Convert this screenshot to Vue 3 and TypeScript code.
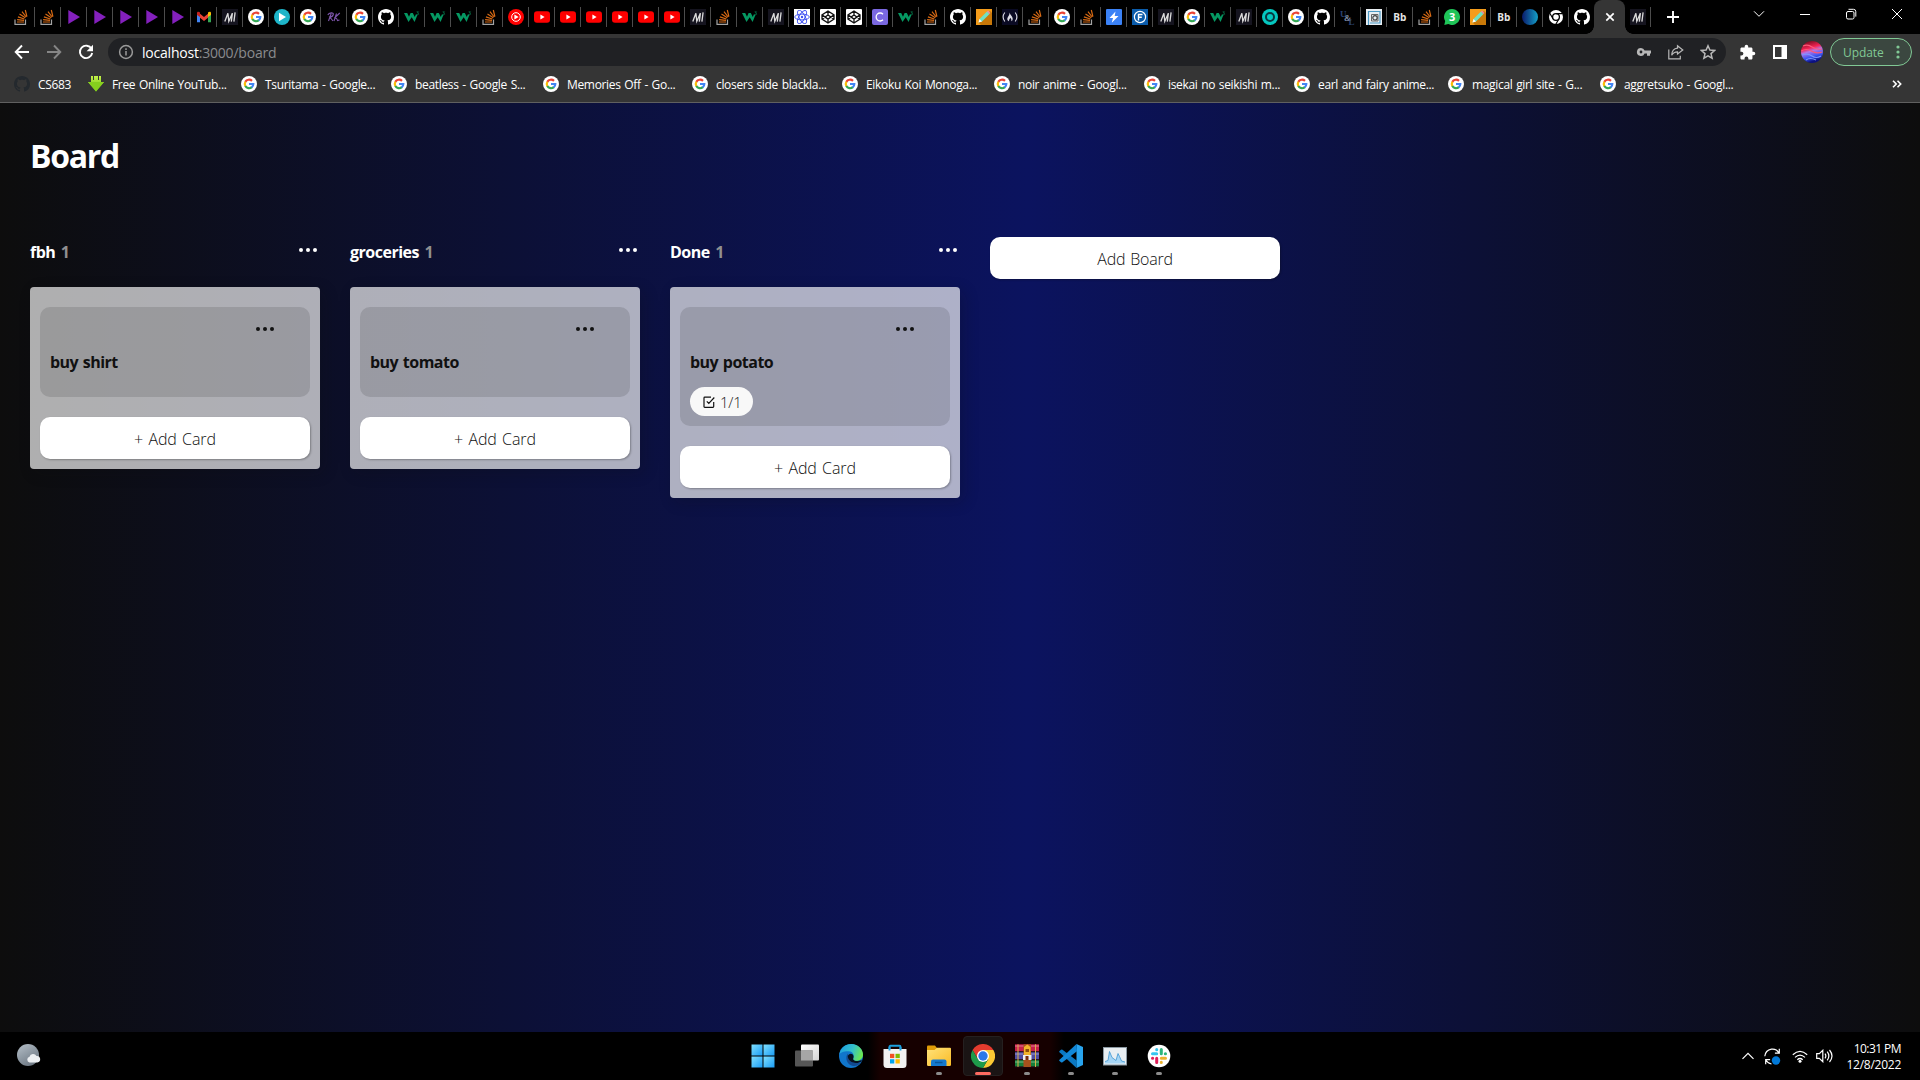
<script setup lang="ts">
interface Bookmark {
  icon: string
  label: string
  width: number
}

interface Card {
  title: string
  tasks?: string
}

interface Column {
  title: string
  cards: Card[]
}

interface TaskbarApp {
  icon: string
  state?: 'open' | 'active'
}

const tabs: string[] =
  ('so so play play play play play gmail em google teal google rk google github w3 w3 w3 so ytm ' +
    'yt yt yt yt yt yt em so w3 em react pen pen cee w3 so github pencil fcc so google so bolt eff em ' +
    'google w3 em ring google github ul maze bb so whatsapp pencil bb orb chromium github').split(' ')

const bookmarks: Bookmark[] = [
  { icon: 'github-dark', label: 'CS683', width: 74 },
  { icon: 'download', label: 'Free Online YouTub...', width: 153 },
  { icon: 'google', label: 'Tsuritama - Google...', width: 150 },
  { icon: 'google', label: 'beatless - Google S...', width: 152 },
  { icon: 'google', label: 'Memories Off - Go...', width: 149 },
  { icon: 'google', label: 'closers side blackla...', width: 150 },
  { icon: 'google', label: 'Eikoku Koi Monoga...', width: 152 },
  { icon: 'google', label: 'noir anime - Googl...', width: 150 },
  { icon: 'google', label: 'isekai no seikishi m...', width: 150 },
  { icon: 'google', label: 'earl and fairy anime...', width: 154 },
  { icon: 'google', label: 'magical girl site - G...', width: 152 },
  { icon: 'google', label: 'aggretsuko - Googl...', width: 150 },
]

const columns: Column[] = [
  { title: 'fbh', cards: [{ title: 'buy shirt' }] },
  { title: 'groceries', cards: [{ title: 'buy tomato' }] },
  { title: 'Done', cards: [{ title: 'buy potato', tasks: '1/1' }] },
]

const apps: TaskbarApp[] = [
  { icon: 'windows' },
  { icon: 'taskview' },
  { icon: 'edge' },
  { icon: 'store' },
  { icon: 'explorer', state: 'open' },
  { icon: 'chrome', state: 'active' },
  { icon: 'winrar', state: 'open' },
  { icon: 'vscode', state: 'open' },
  { icon: 'monitor', state: 'open' },
  { icon: 'slack', state: 'open' },
]
</script>

<template>
  <svg class="sprite" width="0" height="0" aria-hidden="true">
    <defs>
      <linearGradient id="g-win" x1="0" y1="0" x2="1" y2="1"><stop offset="0" stop-color="#7fe0ff" /><stop offset="1" stop-color="#1a9cf5" /></linearGradient>
      <linearGradient id="g-orb" x1="0" x2="1"><stop offset="0" stop-color="#0a1a6b" /><stop offset="1" stop-color="#14a0c8" /></linearGradient>
      <linearGradient id="g-edge" x1="0" y1="0.2" x2="1" y2="0.5"><stop offset="0" stop-color="#1b9de2" /><stop offset="0.55" stop-color="#35c1c9" /><stop offset="1" stop-color="#6be84f" /></linearGradient>
      <linearGradient id="g-moon" x1="0" y1="0" x2="0.6" y2="1"><stop offset="0" stop-color="#b6c0c9" /><stop offset="1" stop-color="#6f7a85" /></linearGradient>
      <linearGradient id="g-folder" x1="0" y1="0" x2="1" y2="1"><stop offset="0" stop-color="#ffe27a" /><stop offset="1" stop-color="#fabb26" /></linearGradient>
      <linearGradient id="g-tv" x1="0" y1="0" x2="1" y2="1"><stop offset="0" stop-color="#fff" /><stop offset="1" stop-color="#d4d4d4" /></linearGradient>
      <linearGradient id="g-av" x1="0" y1="0" x2="0.3" y2="1"><stop offset="0" stop-color="#54040f" /><stop offset="0.4" stop-color="#f52454" /><stop offset="0.55" stop-color="#b277e8" /><stop offset="0.8" stop-color="#3a55f2" /><stop offset="1" stop-color="#0c1080" /></linearGradient>
      <linearGradient id="g-dl" x1="0" y1="0" x2="0" y2="1"><stop offset="0" stop-color="#c4f24a" /><stop offset="1" stop-color="#63b80b" /></linearGradient>
    </defs>
    <symbol id="so" viewBox="0 0 16 16">
      <path d="M1 10.5v4.8h10.500v-4.800" fill="none" stroke="#a3a3a3" stroke-width="1.2" />
      <path d="M3 13h7M3.100 10.600l6.900.8M3.900 7.900l6.500 2.100M5.500 5l5.800 3.700M8 2.600l4.200 5.400M11.300 1l1.600 6.600" stroke="#d86a14" stroke-width="1.2" fill="none" />
    </symbol>
    <symbol id="play" viewBox="0 0 16 16"><path d="M2.300 1l11.700 7-11.700 7z" fill="#8420bd" /></symbol>
    <symbol id="gmail" viewBox="0 0 16 16">
      <path d="M1 4v9.300h3V7z" fill="#4285f4" /><path d="M15 4v9.300h-3V7z" fill="#34a853" />
      <path d="M4 4.700l4 3.200 4-3.200v4L8 12 4 8.700z" fill="#ea4335" />
      <path d="M1 3.800C1 2.500 2.800 2.200 4 3.400V8L1 6z" fill="#c5221f" /><path d="M15 3.800C15 2.500 13.200 2.200 12 3.400V8l3-2z" fill="#fbbc04" />
    </symbol>
    <symbol id="em" viewBox="0 0 16 16">
      <rect width="16" height="16" fill="#15141f" />
      <path d="M2.800 12.600L5.900 4.200 6.800 12.200 10.400 4.200 9.300 12.600M13.100 3.400L11.900 12.600" fill="none" stroke="#dcdcdc" stroke-width="1.300" />
    </symbol>
    <symbol id="google" viewBox="0 0 16 16">
      <circle cx="8" cy="8" r="8" fill="#fff" />
      <g fill="none" stroke-width="2.200">
        <path d="M4.300 5.900A4.300 4.300 0 0 1 11 4.900" stroke="#ea4335" />
        <path d="M4.400 10.200A4.300 4.300 0 0 1 4.400 5.800" stroke="#fbbc05" />
        <path d="M10.900 11.200A4.300 4.300 0 0 1 4.300 10" stroke="#34a853" />
        <path d="M8 8h4.300A4.300 4.300 0 0 1 10.600 11.400" stroke="#4285f4" />
      </g>
    </symbol>
    <symbol id="teal" viewBox="0 0 16 16"><circle cx="8" cy="8" r="8" fill="#1eb5c9" /><path d="M5 3.800l7 4.200-7 4.200z" fill="#fff" /></symbol>
    <symbol id="rk" viewBox="0 0 16 16">
      <path d="M1.800 6C3 3.500 8 3 7.300 5.500 6.700 7.700 4.500 8 3.800 8L7 12M5.200 4.500L2.500 12M10.500 4.500L8 12M13.800 4L9 8.500Q11 9 11.500 11.500L13.500 11" fill="none" stroke="#7d55ab" stroke-width="1.100" />
    </symbol>
    <symbol id="github-shape" viewBox="0 0 16 16">
      <path d="M8 0C3.580 0 0 3.580 0 8c0 3.540 2.290 6.530 5.470 7.590.4.070.55-.17.55-.38 0-.19-.01-.82-.01-1.490-2.010.37-2.530-.49-2.690-.94-.09-.23-.48-.94-.82-1.130-.28-.15-.68-.52-.01-.53.63-.01 1.080.58 1.230.82.72 1.210 1.870.87 2.330.66.070-.52.28-.87.51-1.070-1.780-.2-3.640-.89-3.640-3.950 0-.87.31-1.590.82-2.150-.08-.2-.36-1.020.08-2.120 0 0 .67-.21 2.200.82.64-.18 1.320-.27 2-.27s1.360.09 2 .27c1.530-1.040 2.200-.82 2.200-.82.44 1.100.16 1.920.08 2.120.51.56.82 1.270.82 2.150 0 3.070-1.870 3.750-3.650 3.950.29.25.54.73.54 1.480 0 1.070-.01 1.930-.01 2.200 0 .21.15.46.55.38A8.010 8.010 0 0 0 16 8c0-4.420-3.580-8-8-8z" />
    </symbol>
    <symbol id="github" viewBox="0 0 16 16"><use href="#github-shape" width="16" height="16" fill="#fff" /></symbol>
    <symbol id="github-dark" viewBox="0 0 16 16"><use href="#github-shape" width="16" height="16" fill="#24292e" /></symbol>
    <symbol id="w3" viewBox="0 0 16 16">
      <path d="M0 4h3.200l1.800 3.800L6.600 4h2.200l2 4 1-2.500h1.800L10.600 13 7.700 8.300 4.500 13z" fill="#059862" />
      <path d="M12.600 2.800h1.900L13.400 4q1.500.1 1.200 1.300-.6.900-2 .3" fill="none" stroke="#048050" stroke-width=".7" />
    </symbol>
    <symbol id="ytm" viewBox="0 0 16 16"><circle cx="8" cy="8" r="8" fill="#f00" /><circle cx="8" cy="8" r="4.300" fill="none" stroke="#fff" stroke-width="1" /><path d="M6.400 5.500l4.200 2.500-4.200 2.500z" fill="#fff" /></symbol>
    <symbol id="yt" viewBox="0 0 16 16"><rect y="2.300" width="16" height="11.400" rx="3" fill="#f00" /><path d="M6.400 5.600l4.200 2.400-4.200 2.400z" fill="#fff" /></symbol>
    <symbol id="react" viewBox="0 0 16 16">
      <rect width="16" height="16" fill="#fff" />
      <g fill="none" stroke="#3b4ef0" stroke-width=".9"><ellipse cx="8" cy="8" rx="7.300" ry="2.900" /><ellipse cx="8" cy="8" rx="7.300" ry="2.900" transform="rotate(60 8 8)" /><ellipse cx="8" cy="8" rx="7.300" ry="2.900" transform="rotate(120 8 8)" /></g>
      <circle cx="8" cy="8" r="1.200" fill="#3b4ef0" />
    </symbol>
    <symbol id="pen" viewBox="0 0 16 16">
      <rect width="16" height="16" rx="1" fill="#fff" />
      <path d="M8 2l6 3.900v4.200L8 14l-6-3.900V5.900zM8 2v4M8 10v4M2 5.900l6 4.200 6-4.200M2 10.100l6-4.100 6 4.100" fill="none" stroke="#111" stroke-width="1.300" />
    </symbol>
    <symbol id="cee" viewBox="0 0 16 16"><rect width="16" height="16" rx="2" fill="#7a68e0" /><path d="M11 5.200A4 4 0 1 0 11 10.800" fill="none" stroke="#fff" stroke-width="1.300" /></symbol>
    <symbol id="pencil" viewBox="0 0 16 16">
      <rect width="16" height="16" fill="#f49c1b" /><path d="M2.500 13.500L14 2l2 2v12H5z" fill="#c87808" />
      <path d="M2.500 13.500l1-3.500L11 2.500 13.500 5 6 12.500z" fill="#6fe0c4" /><path d="M11 2.500l1-1 2.500 2.500-1 1z" fill="#f088a8" /><path d="M2.500 13.500l1-3.500L6 12.500z" fill="#fff" />
    </symbol>
    <symbol id="fcc" viewBox="0 0 16 16">
      <rect width="16" height="16" fill="#0a0a23" />
      <path d="M2.800 3.500Q-.6 8 2.800 12.500M13.200 3.500q3.400 4.500 0 9" fill="none" stroke="#dcdce4" stroke-width="1.100" />
      <path d="M7.500 3.500C8.500 6.500 11 7.500 10.700 10.200 10.500 11.500 9.800 12 9.300 12.300 9.700 10.500 9 10 8.300 8.800 8 10 6.800 10.500 7 12.300 5 11.500 5 9.500 5.800 8.200 6.500 7 7.700 6 7.500 3.500z" fill="#dcdce4" />
    </symbol>
    <symbol id="bolt" viewBox="0 0 16 16"><rect width="16" height="16" rx="1" fill="#3b82f6" /><path d="M9.500 2.500L3.500 9H7l-1.200 4.800L12.500 7H8.700z" fill="#fff" /></symbol>
    <symbol id="eff" viewBox="0 0 16 16"><rect width="16" height="16" fill="#0b5cab" /><circle cx="8" cy="8" r="5.600" fill="none" stroke="#fff" stroke-width="1.200" /><path d="M6.500 11.500V5.500h4M6.500 8.300h3.300" fill="none" stroke="#fff" stroke-width="1.400" /></symbol>
    <symbol id="ring" viewBox="0 0 16 16"><circle cx="8" cy="8" r="8" fill="#05c8c0" /><circle cx="8" cy="8" r="4" fill="none" stroke="#07373f" stroke-width="2" /></symbol>
    <symbol id="ul" viewBox="0 0 16 16"><text class="glyph-ul"><tspan x="0" y="8">U</tspan><tspan x="4" y="12" class="glyph-amp">&amp;</tspan><tspan x="8.500" y="15.500">L</tspan></text></symbol>
    <symbol id="maze" viewBox="0 0 16 16">
      <rect width="16" height="16" fill="#e9eef2" /><path d="M2.500 16V2.500H14V14H4" fill="none" stroke="#4c9ac4" stroke-width="1.200" />
      <path d="M5.500 12V5.500H12V12z" fill="none" stroke="#666" /><circle cx="9" cy="8.800" r="2.200" fill="none" stroke="#444" stroke-width="1.200" />
    </symbol>
    <symbol id="bb" viewBox="0 0 16 16"><text x="1.300" y="12" class="glyph-bb">Bb</text></symbol>
    <symbol id="whatsapp" viewBox="0 0 16 16"><path d="M8 0a8 8 0 1 1-3.700 15.100L.3 16l.9-3.900A8 8 0 0 1 8 0z" fill="#1fc458" /><text x="5" y="12" class="glyph-wa">3</text></symbol>
    <symbol id="orb" viewBox="0 0 16 16"><circle cx="8" cy="8" r="8" fill="url(#g-orb)" /></symbol>
    <symbol id="chromium" viewBox="0 0 16 16">
      <circle cx="8" cy="8" r="7" fill="#fff" /><circle cx="8" cy="8" r="3.400" fill="#fff" stroke="#000" stroke-width="1.300" />
      <path d="M8 4.600h6.500M5 9.700L1.800 4.200M11 9.700L7.800 15.200" stroke="#000" stroke-width="1.200" />
    </symbol>
    <symbol id="download" viewBox="0 0 16 16"><path d="M3 0h2v4h1V0h4v4h1V0h2v6h3L8 15.500 0 6h3z" fill="url(#g-dl)" /><path d="M0 6l8 9.500L16 6z" fill="#86cf1e" /></symbol>

    <symbol id="windows" viewBox="0 0 24 24"><g fill="url(#g-win)"><rect x=".5" y=".5" width="11" height="11" /><rect x="12.500" y=".5" width="11" height="11" /><rect x=".5" y="12.500" width="11" height="11" /><rect x="12.500" y="12.500" width="11" height="11" /></g></symbol>
    <symbol id="taskview" viewBox="0 0 24 24"><rect x="6" y=".5" width="18" height="16" rx="1" fill="url(#g-tv)" /><rect x="0" y="6.500" width="18" height="16" rx="1" fill="#565656" /><path d="M6 6.500h12v10H6z" fill="#a6a6a6" /></symbol>
    <symbol id="edge" viewBox="0 0 24 24">
      <circle cx="12" cy="12" r="12" fill="#1076cc" />
      <path d="M.3 10.500C1.500 4 6.300 0 12.300 0 19.500 0 24 5.500 24 10.500c0 4-3 6.300-6.500 6.300-2.500 0-4-1-3.300-2.400 1.300-2.500.5-7-4.600-7.200C5 7 1 8.500.3 10.500z" fill="url(#g-edge)" />
      <path d="M8.800 9.500C5.500 13.500 8 21 14 22c3.500.5 6.500-1.500 8.500-4-1.500.8-3 1.100-5 1-5-.2-8.500-4.300-8.700-9.500z" fill="#124a91" />
      <path d="M13.800 10.500c-1.500-1.500-4.500-1-5 1.700.2 3.300 3 6.600 8.200 6.800 2.500 0 4-.6 5.500-1.500.8-.6.400-1.700-.4-1.200-3 1.600-8.500.7-7.900-1.900.5-1.200.6-2.700-.4-3.900z" fill="#06111f" />
    </symbol>
    <symbol id="store" viewBox="0 0 24 24">
      <path d="M6.500 6.500V2.800q0-1 1-1h9q1 0 1 1v3.700" fill="none" stroke="#1ba0e0" stroke-width="1.900" /><path d="M.5 5h23v15.500q0 3.500-3.500 3.500H4Q.5 24 .5 20.500z" fill="#f2f2f2" />
      <path d="M6.500 6.500V3M17.500 6.500V3" stroke="#1ba0e0" stroke-width="1.900" />
      <path d="M7 9.800h4.300v4.300H7z" fill="#f25022" /><path d="M12.500 9.800h4.300v4.300h-4.300z" fill="#7fba00" /><path d="M7 15.200h4.300v4.300H7z" fill="#00a4ef" /><path d="M12.500 15.200h4.300v4.300h-4.300z" fill="#ffb900" />
    </symbol>
    <symbol id="explorer" viewBox="0 0 24 24">
      <path d="M0 2.500q0-1 1-1h7l2 2.500v5H0z" fill="#e09b07" /><path d="M0 6h7.500l2.500-2.300h13q1 0 1 1v16q0 1.300-1.300 1.300H1.300Q0 22 0 20.700z" fill="url(#g-folder)" />
      <path d="M4 22v-4.500Q4 15.500 6 15.500h11.500q2 0 2 2V22z" fill="#1479cf" /><path d="M8 18.500h7.500" stroke="#0b5799" stroke-width="1.500" />
    </symbol>
    <symbol id="chrome" viewBox="0 0 24 24">
      <path d="M12 6h10.400A12 12 0 0 1 12 24l5.200-9z" fill="#fcc934" /><path d="M1.600 6A12 12 0 0 1 22.400 6H12L6.800 15z" fill="#e33b2e" /><path d="M1.600 6l5.200 9L12 18l5.200-3L12 24A12 12 0 0 1 1.600 6z" fill="#1e9a4a" />
      <circle cx="12" cy="12" r="6" fill="#fff" /><circle cx="12" cy="12" r="4.700" fill="#2a77ea" />
    </symbol>
    <symbol id="winrar" viewBox="0 0 24 24">
      <rect y=".3" width="24" height="7.400" fill="#c81f4a" /><rect y="8" width="24" height="7.600" fill="#4f4ca3" /><rect y="16" width="24" height="7" fill="#16803a" />
      <path d="M0 2h24M0 10h24M0 18h24" stroke="#fff" stroke-opacity=".28" stroke-width="1.500" /><path d="M0 7.700h24M0 15.700h24M0 22.800h24" stroke="#26101e" stroke-width="1" />
      <path d="M3 .3v22.700M20.500 .3v22.700" stroke="#d8b04a" stroke-width="1" />
      <rect x="8.500" y=".3" width="7.500" height="22.700" fill="#a6521d" /><path d="M9 11V3l3.300-2.500L15.500 3v8z" fill="#f3b32b" /><path d="M10.500 5h3.500v3h-3.500z" fill="#8c4c0d" /><path d="M8 11h8.500v5H8z" fill="#eee" /><path d="M10.500 12h3v4h-3z" fill="#7a2d0c" />
    </symbol>
    <symbol id="vscode" viewBox="0 0 24 24">
      <path d="M17.500 0L24 3v18l-6.500 3z" fill="#28a4ee" /><path d="M17.500 24L.5 8.300q-.6-.7 0-1.300L2 5.700q.8-.5 1.500 0l14.500 11z" fill="#0b78c2" /><path d="M17.500 0L.5 15.700q-.6.700 0 1.300L2 18.300q.8.500 1.500 0L18 7.300z" fill="#1188d8" />
    </symbol>
    <symbol id="monitor" viewBox="0 0 24 24">
      <rect x=".5" y="3.500" width="23" height="17.500" fill="#e8eef2" stroke="#8b99a3" /><path d="M2 19.500v-2l3-1 1.500-9 2.500 6 2 1.500 2 1.500 2-7 1.500 3 2 4.500 3.500 1v1.500z" fill="#a5d5f5" />
      <path d="M2 17.500l3-1 1.500-9 2.500 6 2 1.500 2 1.500 2-7 1.500 3 2 4.500 3.500 1" fill="none" stroke="#3d95d0" stroke-width=".8" />
    </symbol>
    <symbol id="slack" viewBox="0 0 24 24">
      <circle cx="12" cy="12" r="11.300" fill="#fff" />
      <g stroke-width="3" stroke-linecap="round"><path d="M5.500 9.700h4.200M9.700 5.500v.2" stroke="#36c5f0" /><path d="M14.300 5.500v4.200M18.300 9.700h.2" stroke="#2eb67d" /><path d="M18.500 14.300h-4.200M14.300 18.300v.2" stroke="#ecb22e" /><path d="M9.700 18.500v-4.200M5.500 14.300h.2" stroke="#e01e5a" /></g>
    </symbol>
  </svg>

  <div class="screen">
    <div class="tabstrip">
      <div v-for="(tab, i) in tabs" :key="i" class="tab" :class="{ bare: i === tabs.length - 1 }">
        <svg class="favicon"><use :href="'#' + tab" /></svg>
      </div>
      <div class="tab-active">
        <svg viewBox="0 0 10 10" class="tab-close"><path d="M1.300 1.300l7.400 7.400M8.700 1.300L1.300 8.700" /></svg>
      </div>
      <div class="tab last"><svg class="favicon"><use href="#em" /></svg></div>
      <svg class="new-tab" viewBox="0 0 12 12"><path d="M6 0v12M0 6h12" /></svg>
      <div class="window-controls">
        <svg viewBox="0 0 12 12"><path d="M1 3.300l5 5 5-5" /></svg>
        <svg viewBox="0 0 12 12"><path d="M1 6.500h10" /></svg>
        <svg viewBox="0 0 12 12"><rect x="1.500" y="3.500" width="7.500" height="7.500" rx="1.500" /><path d="M3.500 1.300h5q2.300 0 2.300 2.300v5" /></svg>
        <svg viewBox="0 0 12 12"><path d="M1 1l10 10M11 1L1 11" /></svg>
      </div>
    </div>

    <div class="toolbar">
      <svg class="nav" viewBox="0 0 16 16"><path d="M15 8H2M8 1.500L1.700 8 8 14.500" /></svg>
      <svg class="nav dim" viewBox="0 0 16 16"><path d="M1 8h13M8 1.500L14.300 8 8 14.500" /></svg>
      <svg class="nav reload" viewBox="0 0 16 16"><path d="M13.500 4.800A6.200 6.200 0 1 0 14.200 9" /><path class="solid" d="M15 .8v6.400H8.600z" /></svg>
      <div class="omnibox">
        <svg class="info" viewBox="0 0 16 16"><circle cx="8" cy="8" r="6.400" /><path d="M8 7v4.500M8 4.300v1.600" /></svg>
        <span class="url">localhost<span class="path">:3000/board</span></span>
        <svg class="act" viewBox="0 0 16 16"><path class="fill" fill-rule="evenodd" d="M5 4a4 4 0 0 1 3.600 2.500H15v3h-1v2.200h-3V9.500H8.600A4 4 0 1 1 5 4zm0 2.600a1.400 1.400 0 1 0 0 2.800 1.400 1.400 0 0 0 0-2.800z" /></svg>
        <svg class="act" viewBox="0 0 16 16"><path d="M.8 5.500v9.300h11.500v-3M9.500 1.800l5.300 4.200-5.300 4V7.800C7 7.800 5 8.800 3.700 11.300 3.900 7.300 6 4.500 9.500 4.200z" /></svg>
        <svg class="act" viewBox="0 0 16 16"><path d="M8 1.800l1.900 4.300 4.700.4-3.600 3.100 1.100 4.600L8 11.800l-4.100 2.400L5 9.600 1.400 6.500l4.700-.4z" stroke-width="1.500" /></svg>
      </div>
      <svg class="ext" viewBox="0 0 24 24"><path d="M20.500 11H19V7c0-1.100-.9-2-2-2h-4V3.500a2.500 2.500 0 0 0-5 0V5H4c-1.100 0-2 .9-2 2v3.800h1.500a2.700 2.700 0 0 1 0 5.400H2V20c0 1.100.9 2 2 2h3.800v-1.500a2.700 2.700 0 0 1 5.400 0V22H17c1.100 0 2-.9 2-2v-4h1.500a2.500 2.500 0 0 0 0-5z" /></svg>
      <svg class="panel" viewBox="0 0 14 14"><path fill-rule="evenodd" d="M0 0h14v14H0zM2 2v10h6.500V2z" /></svg>
      <svg class="avatar" viewBox="0 0 22 22"><circle cx="11" cy="11" r="11" fill="url(#g-av)" /><path d="M2 5q5-2 9 1t10 2M.3 10q5-3 10 0t11 1" fill="none" stroke="#ff5878" stroke-width="1.200" /><path d="M1 14q6-2 10 1t9 0M5 19q4-3 10 0" fill="none" stroke="#7d92ff" stroke-width="1.200" /></svg>
      <div class="update"><span>Update</span><svg viewBox="0 0 4 14"><circle cx="2" cy="2" r="1.600" /><circle cx="2" cy="7" r="1.600" /><circle cx="2" cy="12" r="1.600" /></svg></div>
    </div>

    <div class="bookmarks">
      <div v-for="b in bookmarks" :key="b.label" class="bookmark" :style="{ width: b.width + 'px' }">
        <svg class="favicon"><use :href="'#' + b.icon" /></svg>
        <span>{{ b.label }}</span>
      </div>
      <svg class="more" viewBox="0 0 10 8"><path d="M1 .8L4.200 4 1 7.200M5.500 .8L8.700 4 5.500 7.200" /></svg>
    </div>

    <main class="page">
      <h1>Board</h1>
      <div class="board">
        <section v-for="col in columns" :key="col.title" class="column">
          <header>
            <h2>{{ col.title }} <span>{{ col.cards.length }}</span></h2>
            <svg class="dots" viewBox="0 0 20 6"><circle cx="3" cy="3" r="2" /><circle cx="10" cy="3" r="2" /><circle cx="17" cy="3" r="2" /></svg>
          </header>
          <div class="cards">
            <article v-for="card in col.cards" :key="card.title" class="card">
              <svg class="dots" viewBox="0 0 20 6"><circle cx="3" cy="3" r="2" /><circle cx="10" cy="3" r="2" /><circle cx="17" cy="3" r="2" /></svg>
              <h3>{{ card.title }}</h3>
              <div v-if="card.tasks" class="tasks">
                <svg viewBox="0 0 12 12"><path d="M10.700 6v4.500q0 .8-.8.800H1.800q-.8 0-.8-.8V2q0-.8.8-.8H8M3.800 5.300l2 2 5.500-5.800" /></svg>
                <span>{{ card.tasks }}</span>
              </div>
            </article>
            <button class="add">+ Add Card</button>
          </div>
        </section>
        <button class="add add-board">Add Board</button>
      </div>
    </main>

    <footer class="taskbar">
      <svg class="weather" viewBox="0 0 24 24"><circle cx="11" cy="11" r="11" fill="url(#g-moon)" /><path d="M12.500 18.500a3 3 0 0 1 0-5.800 3.800 3.800 0 0 1 7-.7 3.200 3.200 0 0 1 .8 6.500z" fill="#eceff2" /></svg>
      <div class="apps">
        <div v-for="app in apps" :key="app.icon" class="app" :class="app.state">
          <svg><use :href="'#' + app.icon" /></svg>
        </div>
      </div>
      <div class="tray">
        <svg class="chevron" viewBox="0 0 12 8"><path d="M.5 6.800L6 1.300l5.500 5.500" /></svg>
        <svg class="sync" viewBox="0 0 17 17"><path d="M.8 8.300Q1.300 2.500 7.500 1.200 12.500.6 14.800 4.800M15.300 .8v4.400h-4.400M7.500 16Q4 15.600 2 12.300M1.700 16.200v-4.500h4.400" /><circle cx="12" cy="12.500" r="4.200" /></svg>
        <svg class="wifi" viewBox="0 0 16 13"><path d="M.8 4.800q7.200-7 14.400 0M3 7.400q5-4.700 10 0M5.300 9.700q2.700-2.400 5.400 0" /><circle cx="8" cy="11.300" r="1.500" /></svg>
        <svg class="volume" viewBox="0 0 17 14"><path d="M.7 4.700h2.600L6.800 1.300v11.400L3.300 9.300H.7zM9 4.700q1.700 2.300 0 4.600M11.200 2.700q3.300 4.300 0 8.600M13.500 1q5 6 0 12" /></svg>
        <div class="clock"><span>10:31 PM</span><span class="date">12/8/2022</span></div>
      </div>
    </footer>
  </div>
</template>

<style>
html,
body {
  background: #000;
  overflow: hidden;
}
</style>

<style scoped>
* {
  box-sizing: border-box;
}

svg {
  display: block;
  flex: none;
}

.sprite {
  position: absolute;
}

.glyph-ul {
  font: bold 9px 'Liberation Serif', serif;
  fill: #2a4270;
}

.glyph-amp {
  fill: #8492ad;
}

.glyph-bb {
  font: bold 10px 'Open Sans', sans-serif;
  fill: #e4e4e4;
}

.glyph-wa {
  font: bold 11px 'Open Sans', sans-serif;
  fill: #fff;
}

.screen {
  width: 1920px;
  height: 1080px;
  display: flex;
  flex-direction: column;
  overflow: hidden;
  font-family: 'Open Sans', 'Noto Sans', sans-serif;
}

.favicon {
  width: 16px;
  height: 16px;
}

.tabstrip {
  height: 34px;
  flex: none;
  display: flex;
  background: #000;
  padding-left: 9px;
}

.tab {
  width: 26px;
  height: 20px;
  margin-top: 7px;
  padding: 2px 0 0 5px;
  flex: none;
  border-right: 1px solid #4c4c4c;
}

.tab.bare {
  border-color: transparent;
}

.tab-active {
  position: relative;
  width: 31px;
  height: 34px;
  margin-left: -1px;
  display: flex;
  align-items: center;
  justify-content: center;
  background: #353535;
  border-radius: 8px 8px 0 0;
}

.tab-active::before,
.tab-active::after {
  content: '';
  position: absolute;
  bottom: 0;
  width: 8px;
  height: 8px;
}

.tab-active::before {
  left: -8px;
  background: radial-gradient(circle at 0 0, transparent 7.5px, #353535 8px);
}

.tab-active::after {
  right: -8px;
  background: radial-gradient(circle at 100% 0, transparent 7.5px, #353535 8px);
}

.tab-close {
  width: 10px;
  height: 10px;
  stroke: #fff;
  stroke-width: 1.7;
}

.new-tab {
  width: 12px;
  height: 12px;
  margin: 11px 0 0 16px;
  stroke: #fff;
  stroke-width: 1.9;
}

.window-controls {
  display: flex;
  gap: 34px;
  margin: 8px 17px 0 auto;
}

.window-controls svg {
  width: 12px;
  height: 12px;
  fill: none;
  stroke: #fff;
  stroke-width: 1;
}

.toolbar {
  height: 32px;
  flex: none;
  display: flex;
  align-items: center;
  background: #353535;
  padding: 4px 8px 0 14px;
}

.nav {
  width: 16px;
  height: 16px;
  margin-right: 16px;
  fill: none;
  stroke: #fff;
  stroke-width: 1.9;
}

.nav.dim {
  stroke: #868686;
}

.reload {
  margin-right: 14px;
}

.solid {
  fill: #fff;
  stroke: none;
}

.omnibox {
  width: 1618px;
  height: 28px;
  display: flex;
  align-items: center;
  background: #202124;
  border-radius: 14px;
  padding: 0 10px;
}

.info {
  width: 16px;
  height: 16px;
  fill: none;
  stroke: #9a9a9a;
  stroke-width: 1.5;
}

.url {
  margin: 1px auto 0 8px;
  font-size: 14px;
  line-height: 20px;
  letter-spacing: -0.21px;
  color: #fff;
}

.path {
  color: #8a8b8e;
}

.act {
  width: 16px;
  height: 16px;
  margin-left: 16px;
  fill: none;
  stroke: #b8b8b8;
  stroke-width: 1.2;
}

.act .fill {
  fill: #b8b8b8;
  stroke: none;
}

.ext {
  width: 17px;
  height: 17px;
  margin-left: 13px;
  fill: #fff;
}

.panel {
  width: 14px;
  height: 14px;
  margin-left: 17px;
  fill: #fff;
}

.avatar {
  width: 22px;
  height: 22px;
  margin-left: 14px;
}

.update {
  width: 82px;
  height: 28px;
  margin-left: 7px;
  padding: 0 11px 0 12px;
  display: flex;
  align-items: center;
  justify-content: space-between;
  border: 1px solid #81c995;
  border-radius: 14px;
  background: #3b4740;
  color: #81c995;
  font-size: 12px;
  letter-spacing: -0.1px;
}

.update svg {
  width: 4px;
  height: 14px;
  fill: #81c995;
}

.bookmarks {
  height: 37px;
  flex: none;
  display: flex;
  align-items: center;
  background: #353535;
  border-bottom: 1px solid #606060;
  padding: 0 18px 0 14px;
}

.bookmark {
  flex: none;
  display: flex;
  align-items: center;
  gap: 8px;
  font-size: 12px;
  line-height: 16px;
  letter-spacing: -0.33px;
  word-spacing: 0.9px;
  white-space: nowrap;
  color: #fff;
}

.bookmark span {
  margin-top: 1px;
}

.more {
  width: 10px;
  height: 8px;
  margin-left: auto;
  fill: none;
  stroke: #fff;
  stroke-width: 1.6;
}

.page {
  flex: 1;
  padding: 32px 30px;
  background: linear-gradient(90deg, #0d0d0d 0%, #0b135f 53.5%, #0d0d0d 100%);
}

h1 {
  height: 44px;
  margin: -1px 0 59px;
  font-size: 32px;
  line-height: 44px;
  letter-spacing: -1.3px;
  color: #fff;
}

.board {
  display: flex;
  align-items: flex-start;
  gap: 30px;
}

.column {
  width: 290px;
}

.column header {
  height: 50px;
  display: flex;
  justify-content: space-between;
}

h2 {
  margin: 3px 0 0;
  font-size: 16px;
  line-height: 24px;
  letter-spacing: -0.5px;
  word-spacing: 1.8px;
  color: #fff;
}

h2 span {
  color: #909090;
}

.dots {
  width: 20px;
  height: 6px;
}

header .dots {
  margin: 10px 2px 0 0;
  fill: #fff;
}

.cards {
  padding: 20px 10px 10px;
  border-radius: 4px;
  background: rgba(255, 255, 255, 0.67);
  box-shadow: 4px 4px 15px rgba(13, 13, 13, 0.2);
}

.card {
  min-height: 90px;
  margin-bottom: 20px;
  padding: 19px 10px 10px;
  border-radius: 10px;
  background: rgba(13, 13, 13, 0.13);
}

.card .dots {
  margin-left: 205px;
  fill: #111;
}

h3 {
  margin: 18px 0 0;
  font-size: 16px;
  line-height: 24px;
  font-weight: 700;
  letter-spacing: -0.52px;
  word-spacing: 1px;
  color: #111;
}

.tasks {
  width: 63px;
  height: 29px;
  margin-top: 13px;
  display: flex;
  align-items: center;
  gap: 5px;
  padding-left: 13px;
  border-radius: 15px;
  background: #f8f8f8;
  font-size: 15px;
  font-weight: 300;
  letter-spacing: -0.2px;
  color: #222;
}

.tasks svg {
  width: 12px;
  height: 12px;
  fill: none;
  stroke: #111;
  stroke-width: 1.2;
}

.add {
  display: block;
  width: 100%;
  height: 42px;
  padding: 1px 0 0;
  border: 0;
  border-radius: 10px;
  background: #fff;
  box-shadow: 1px 1px 2px rgba(13, 13, 13, 0.3);
  font: 300 16px 'Open Sans', 'Noto Sans', sans-serif;
  letter-spacing: -0.08px;
  word-spacing: 1.2px;
  color: #111;
}

.add-board {
  width: 290px;
  letter-spacing: -0.25px;
}

.taskbar {
  height: 48px;
  flex: none;
  display: grid;
  grid-template-columns: 1fr auto 1fr;
  align-items: center;
  background: linear-gradient(90deg, transparent 868px, #160000 880px 1050px, transparent 1064px) #000;
}

.weather {
  width: 24px;
  height: 24px;
  margin-left: 17px;
}

.apps {
  display: flex;
  gap: 4px;
  padding-left: 2px;
}

.app {
  position: relative;
  width: 40px;
  height: 40px;
  display: flex;
  align-items: center;
  justify-content: center;
}

.app svg {
  width: 24px;
  height: 24px;
}

.app.active {
  background: #1a1414;
  border: 1px solid #252020;
  border-radius: 4px;
}

.app.open::after,
.app.active::after {
  content: '';
  position: absolute;
  bottom: 1px;
  width: 6px;
  height: 3px;
  border-radius: 2px;
  background: #8b8b8b;
}

.app.active::after {
  bottom: 0;
  width: 16px;
  background: #ff6b61;
}

.tray {
  display: flex;
  align-items: center;
  justify-content: flex-end;
  padding-right: 19px;
}

.tray svg {
  fill: none;
  stroke: #fff;
  stroke-width: 1.2;
}

.chevron {
  width: 12px;
  height: 8px;
}

.sync {
  width: 17px;
  height: 17px;
  margin-left: 10px;
}

.tray .sync circle {
  fill: #0078d7;
  stroke: none;
}

.wifi {
  width: 16px;
  height: 13px;
  margin-left: 11px;
}

.tray .wifi circle {
  fill: #fff;
  stroke: none;
}

.volume {
  width: 17px;
  height: 14px;
  margin-left: 8px;
}

.clock {
  width: 68px;
  display: flex;
  flex-direction: column;
  padding-top: 1px;
  text-align: right;
  font-size: 12px;
  line-height: 16px;
  letter-spacing: -0.55px;
  color: #fff;
}

.date {
  letter-spacing: -0.25px;
}
</style>
